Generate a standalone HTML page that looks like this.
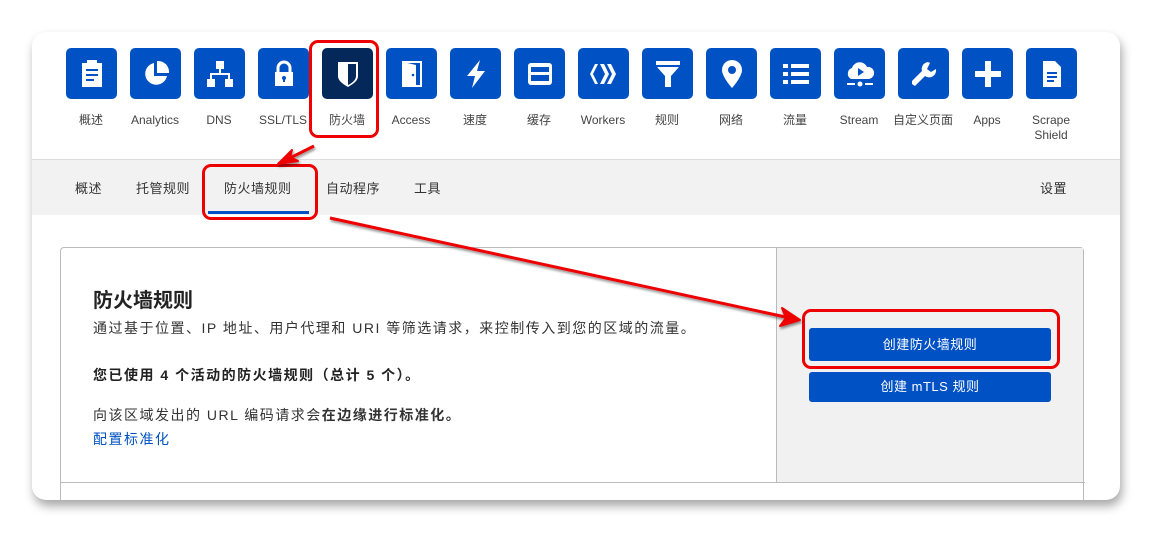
<!DOCTYPE html>
<html><head><meta charset="utf-8"><style>
*{box-sizing:border-box;margin:0;padding:0}
body{width:1152px;height:533px;background:#fff;font-family:"Liberation Sans","Noto Sans CJK SC",sans-serif;position:relative;overflow:hidden;color:#333}
.card{position:absolute;left:32px;top:32px;width:1088px;height:468px;background:#fff;border-radius:14px;box-shadow:2px 6px 10px rgba(0,0,0,.35);overflow:hidden}
.ic{position:absolute;top:16px;width:51px;height:51px;background:#0051c3;border-radius:5px;display:flex;align-items:center;justify-content:center}
.lb{position:absolute;top:81px;width:64px;text-align:center;font-size:12px;color:#444;line-height:15px}
.sub{position:absolute;left:0;top:127px;width:1088px;height:56px;background:#f2f2f2;border-top:1px solid #ddd}
.sub span{position:absolute;top:18px;font-size:13px;color:#333;letter-spacing:.5px}
.panel{position:absolute;left:28px;top:215px;width:1024px;height:260px;border:1px solid #bbb;border-radius:4px 4px 0 0}
.right{position:absolute;left:715px;top:0;width:307px;height:234px;background:#f1f1f1;border-left:1px solid #bbb}
.hl{position:absolute;left:0;top:234px;width:1024px;border-top:1px solid #bbb}
.btn{position:absolute;left:32px;width:242px;background:#0051c3;color:#fff;font-size:13px;text-align:center;border-radius:3px;letter-spacing:.5px}
.rb{position:absolute;border:3px solid #e00;border-radius:9px}
.t{position:absolute;left:32px;font-size:14px;letter-spacing:1.5px;white-space:nowrap}
</style></head><body>
<div class="card">
<div class="ic" style="left:34px"><svg width="26" height="28" viewBox="0 0 26 28"><rect x="3" y="3" width="20" height="24" fill="#fff"/><rect x="8" y="0" width="10" height="5" fill="#fff"/><g fill="#0051c3"><rect x="7" y="9" width="12" height="2"/><rect x="7" y="14" width="12" height="2"/><rect x="7" y="19" width="8" height="2"/></g></svg></div>
<div class="ic" style="left:98px"><svg width="28" height="28" viewBox="0 0 28 28"><path d="M12 3A11 11 0 1 0 25 16H12Z" fill="#fff"/><path d="M15 1A11 11 0 0 1 27 13H15Z" fill="#fff"/></svg></div>
<div class="ic" style="left:162px"><svg width="28" height="28" viewBox="0 0 28 28" fill="#fff"><rect x="10" y="1" width="8" height="8"/><rect x="13" y="9" width="2" height="5"/><rect x="4" y="13" width="20" height="2"/><rect x="4" y="13" width="2" height="6"/><rect x="22" y="13" width="2" height="6"/><rect x="1" y="19" width="8" height="8"/><rect x="19" y="19" width="8" height="8"/></svg></div>
<div class="ic" style="left:226px"><svg width="24" height="28" viewBox="0 0 24 28"><path d="M6 13V8a6 6 0 0 1 12 0v5" stroke="#fff" stroke-width="3" fill="none"/><rect x="3" y="12" width="18" height="14" fill="#fff"/><circle cx="12" cy="18" r="2" fill="#0051c3"/><rect x="11" y="18" width="2" height="4" fill="#0051c3"/></svg></div>
<div class="ic" style="left:290px;background:#04285a"><svg width="24" height="28" viewBox="0 0 24 28"><path d="M2 2H22V16C22 21 17 24 12 27C7 24 2 21 2 16Z" fill="#fff"/><path d="M12 4H20V16C20 20 16 23 12 25Z" fill="#04285a"/></svg></div>
<div class="ic" style="left:354px"><svg width="24" height="28" viewBox="0 0 24 28"><path d="M3 2H21V26H3Z" fill="none" stroke="#fff" stroke-width="2"/><path d="M3 2L16 5V27L3 26Z" fill="#fff"/><circle cx="13" cy="15" r="1.3" fill="#0051c3"/></svg></div>
<div class="ic" style="left:418px"><svg width="24" height="30" viewBox="0 0 24 30"><path d="M16 1L3 17H11L8 29L21 12H13Z" fill="#fff"/></svg></div>
<div class="ic" style="left:482px"><svg width="26" height="24" viewBox="0 0 26 24"><rect x="1" y="1" width="24" height="22" rx="3" fill="#fff"/><rect x="4" y="5" width="18" height="5" fill="#0051c3"/><rect x="4" y="13" width="18" height="6" fill="#0051c3"/><rect x="1" y="10" width="24" height="3" fill="#fff"/></svg></div>
<div class="ic" style="left:546px"><svg width="30" height="24" viewBox="0 0 30 24" fill="#fff"><path d="M6 2L1 12L6 22H9L4 12L9 2Z"/><path d="M11 2H15L20 12L15 22H11L16 12Z"/><path d="M18 2H22L27 12L22 22H18L23 12Z"/></svg></div>
<div class="ic" style="left:610px"><svg width="26" height="28" viewBox="0 0 26 28" fill="#fff"><rect x="1" y="1" width="24" height="4"/><path d="M2 7H24L16 16V27H10V16Z"/></svg></div>
<div class="ic" style="left:674px"><svg width="22" height="30" viewBox="0 0 22 30"><path d="M11 1A10 10 0 0 1 21 11C21 18 11 29 11 29C11 29 1 18 1 11A10 10 0 0 1 11 1Z" fill="#fff"/><circle cx="11" cy="11" r="4" fill="#0051c3"/></svg></div>
<div class="ic" style="left:738px"><svg width="28" height="24" viewBox="0 0 28 24" fill="#fff"><rect x="1" y="2" width="5" height="4"/><rect x="9" y="2" width="18" height="4"/><rect x="1" y="10" width="5" height="4"/><rect x="9" y="10" width="18" height="4"/><rect x="1" y="18" width="5" height="4"/><rect x="9" y="18" width="18" height="4"/></svg></div>
<div class="ic" style="left:802px"><svg width="32" height="30" viewBox="0 0 32 30"><path d="M7 20A6 6 0 0 1 8 9A8 8 0 0 1 23 8A6 6 0 0 1 25 20Z" fill="#fff"/><path d="M14 9L20 13L14 17Z" fill="#0051c3"/><rect x="3" y="24" width="8" height="2" fill="#fff"/><rect x="21" y="24" width="8" height="2" fill="#fff"/><circle cx="16" cy="25" r="2.5" fill="#fff"/></svg></div>
<div class="ic" style="left:866px"><svg width="28" height="28" viewBox="0 0 28 28"><path d="M18 2A7 7 0 0 0 12 11L2 21L2 24L5 26L15 16A7 7 0 0 0 26 9L21 12L17 9L20 3Z" fill="#fff"/></svg></div>
<div class="ic" style="left:930px"><svg width="28" height="28" viewBox="0 0 28 28" fill="#fff"><rect x="11" y="1" width="6" height="26"/><rect x="1" y="11" width="26" height="6"/></svg></div>
<div class="ic" style="left:994px"><svg width="24" height="28" viewBox="0 0 24 28"><path d="M3 1H15L21 7V27H3Z" fill="#fff"/><g fill="#0051c3"><rect x="7" y="12" width="10" height="2"/><rect x="7" y="16" width="10" height="2"/><rect x="7" y="20" width="7" height="2"/></g></svg></div>
<div class="lb" style="left:27px">概述</div>
<div class="lb" style="left:91px">Analytics</div>
<div class="lb" style="left:155px">DNS</div>
<div class="lb" style="left:219px">SSL/TLS</div>
<div class="lb" style="left:283px">防火墙</div>
<div class="lb" style="left:347px">Access</div>
<div class="lb" style="left:411px">速度</div>
<div class="lb" style="left:475px">缓存</div>
<div class="lb" style="left:539px">Workers</div>
<div class="lb" style="left:603px">规则</div>
<div class="lb" style="left:667px">网络</div>
<div class="lb" style="left:731px">流量</div>
<div class="lb" style="left:795px">Stream</div>
<div class="lb" style="left:853px;width:76px">自定义页面</div>
<div class="lb" style="left:923px">Apps</div>
<div class="lb" style="left:987px">Scrape<br>Shield</div>
<div class="sub">
<span style="left:43px">概述</span><span style="left:104px">托管规则</span><span style="left:192px">防火墙规则</span><span style="left:294px">自动程序</span><span style="left:382px">工具</span><span style="left:1008px">设置</span>
<div style="position:absolute;left:176px;top:51px;width:101px;height:3px;background:#0051c3"></div>
</div>
<div class="panel">
<div style="position:absolute;left:32px;top:36px;font-size:20px;font-weight:bold;color:#222">防火墙规则</div>
<div class="t" style="top:70px">通过基于位置、IP 地址、用户代理和 URI 等筛选请求，来控制传入到您的区域的流量。</div>
<div class="t" style="top:117px;font-weight:bold;color:#222">您已使用 4 个活动的防火墙规则（总计 5 个）。</div>
<div class="t" style="top:157px">向该区域发出的 URL 编码请求会<b>在边缘进行标准化。</b></div>
<div class="t" style="top:181px;color:#0051c3">配置标准化</div>
<div class="right">
<div class="btn" style="top:80px;height:33px;line-height:33px">创建防火墙规则</div>
<div class="btn" style="top:124px;height:30px;line-height:30px">创建 mTLS 规则</div>
</div>
<div class="hl"></div>
</div>
</div>
<div class="rb" style="left:309px;top:40px;width:70px;height:98px"></div>
<div class="rb" style="left:202px;top:164px;width:116px;height:56px"></div>
<div class="rb" style="left:802px;top:309px;width:258px;height:60px"></div>
<svg width="1152" height="533" style="position:absolute;left:0;top:0" >
<defs><filter id="s"><feDropShadow dx="1" dy="2" stdDeviation="1.2" flood-color="#000" flood-opacity=".45"/></filter></defs>
<g filter="url(#s)" fill="#e00" stroke="#e00">
<line x1="314" y1="146" x2="286" y2="160" stroke-width="3"/>
<path d="M278 164L292 150L290 157L298 161Z" stroke-width="2" stroke-linejoin="round"/>
<line x1="330" y1="218" x2="790" y2="318" stroke-width="3"/>
<path d="M800 320L782 308L786 318L780 326Z" stroke-width="2" stroke-linejoin="round"/>
</g></svg>
</body></html>
